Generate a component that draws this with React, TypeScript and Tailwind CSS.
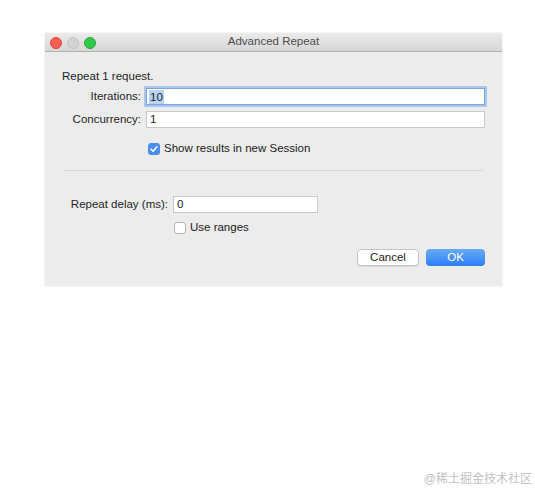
import React from "react";

function TrafficLights() {
  return (
    <div className="absolute left-[5px] top-[4px] flex items-center gap-[5px]">
      <span className="w-[12px] h-[12px] rounded-full bg-[#fc5f57] border border-[#e0443e]" />
      <span className="w-[12px] h-[12px] rounded-full bg-[#d3d3d3] border border-[#c4c4c4]" />
      <span className="w-[12px] h-[12px] rounded-full bg-[#34c84a] border border-[#25a93a]" />
    </div>
  );
}

function Checkbox({ checked }: { checked: boolean }) {
  if (checked) {
    return (
      <span className="w-[12px] h-[12px] rounded-[3px] bg-[#4a8ff0] flex items-center justify-center shrink-0">
        <svg viewBox="0 0 12 12" className="w-[10px] h-[10px]" fill="none" stroke="white" strokeWidth={1.8} strokeLinecap="round" strokeLinejoin="round">
          <path d="M2.5 6.3 5 8.7 9.5 3.3" />
        </svg>
      </span>
    );
  }
  return <span className="w-[12px] h-[12px] rounded-[3px] bg-white border border-[#b5b5b5] shrink-0" />;
}

function Field({ label, value, labelWidth, inputWidth, focused }: { label: string; value: string; labelWidth: string; inputWidth: string; focused?: boolean }) {
  return (
    <div className="flex items-center h-[17px]">
      <div className={`${labelWidth} text-right pr-[5px] text-[#262626]`}>{label}</div>
      <div
        className={`${inputWidth} h-[17px] bg-white flex items-center px-[2px] ${
          focused ? "border border-[#7ea6dd] shadow-[0_0_0_2px_#a9c6ee]" : "border border-[#c9c9c9]"
        }`}
      >
        {focused ? <span className="bg-[#b6d2f6] leading-[14px] px-[1px]">{value}</span> : <span className="px-[1px]">{value}</span>}
      </div>
    </div>
  );
}

export default function App() {
  return (
    <div className="relative w-[535px] h-[498px] bg-white" style={{ fontFamily: '"Liberation Sans", Arial, sans-serif' }}>
      <div className="pt-[33px] pl-[45px]">
        <div className="w-[457px] h-[253px] bg-[#ececec] flex flex-col text-[11.5px] text-[#222] shadow-[0_0_2px_rgba(0,0,0,0.12)]">
          <div className="relative h-[19px] shrink-0 bg-gradient-to-b from-[#ebebeb] to-[#d6d6d6] border-b border-[#b1b1b1] flex items-center justify-center">
            <TrafficLights />
            <span className="text-[#4d4d4d] text-[11.5px]">Advanced Repeat</span>
          </div>

          <div className="pl-[17px] pt-[17px] leading-[14px] text-[#1f1f1f]">Repeat 1 request.</div>

          <div className="mt-[5px] flex flex-col gap-[6px]">
            <Field label="Iterations:" value="10" labelWidth="w-[101px]" inputWidth="w-[339px]" focused />
            <Field label="Concurrency:" value="1" labelWidth="w-[101px]" inputWidth="w-[339px]" />
          </div>

          <div className="mt-[15px] h-[12px] pl-[103px] flex items-center gap-[4px]">
            <Checkbox checked />
            <span>Show results in new Session</span>
          </div>

          <div className="mt-[15px] mx-[19px] h-px bg-[#d9d9d9] shrink-0" />

          <div className="mt-[25px]">
            <Field label="Repeat delay (ms):" value="0" labelWidth="w-[128px]" inputWidth="w-[145px]" />
          </div>

          <div className="mt-[9px] h-[12px] pl-[129px] flex items-center gap-[4px]">
            <Checkbox checked={false} />
            <span>Use ranges</span>
          </div>

          <div className="mt-[15px] pr-[17px] flex justify-end gap-[7px]">
            <button className="w-[62px] h-[17px] bg-white border border-[#c4c4c4] rounded-[4px] shadow-[0_1px_0_rgba(0,0,0,0.08)] text-[#222] leading-none">
              Cancel
            </button>
            <button className="w-[59px] h-[17px] rounded-[4px] bg-gradient-to-b from-[#67aaf9] to-[#2a7ef5] text-white leading-none">
              OK
            </button>
          </div>
        </div>
      </div>

      <div
        className="absolute right-[3px] bottom-[10px] text-[12px] text-[#c2c2c2]"
        style={{ fontFamily: '"Liberation Sans", "Noto Sans CJK SC", sans-serif' }}
      >
        @稀土掘金技术社区
      </div>
    </div>
  );
}
